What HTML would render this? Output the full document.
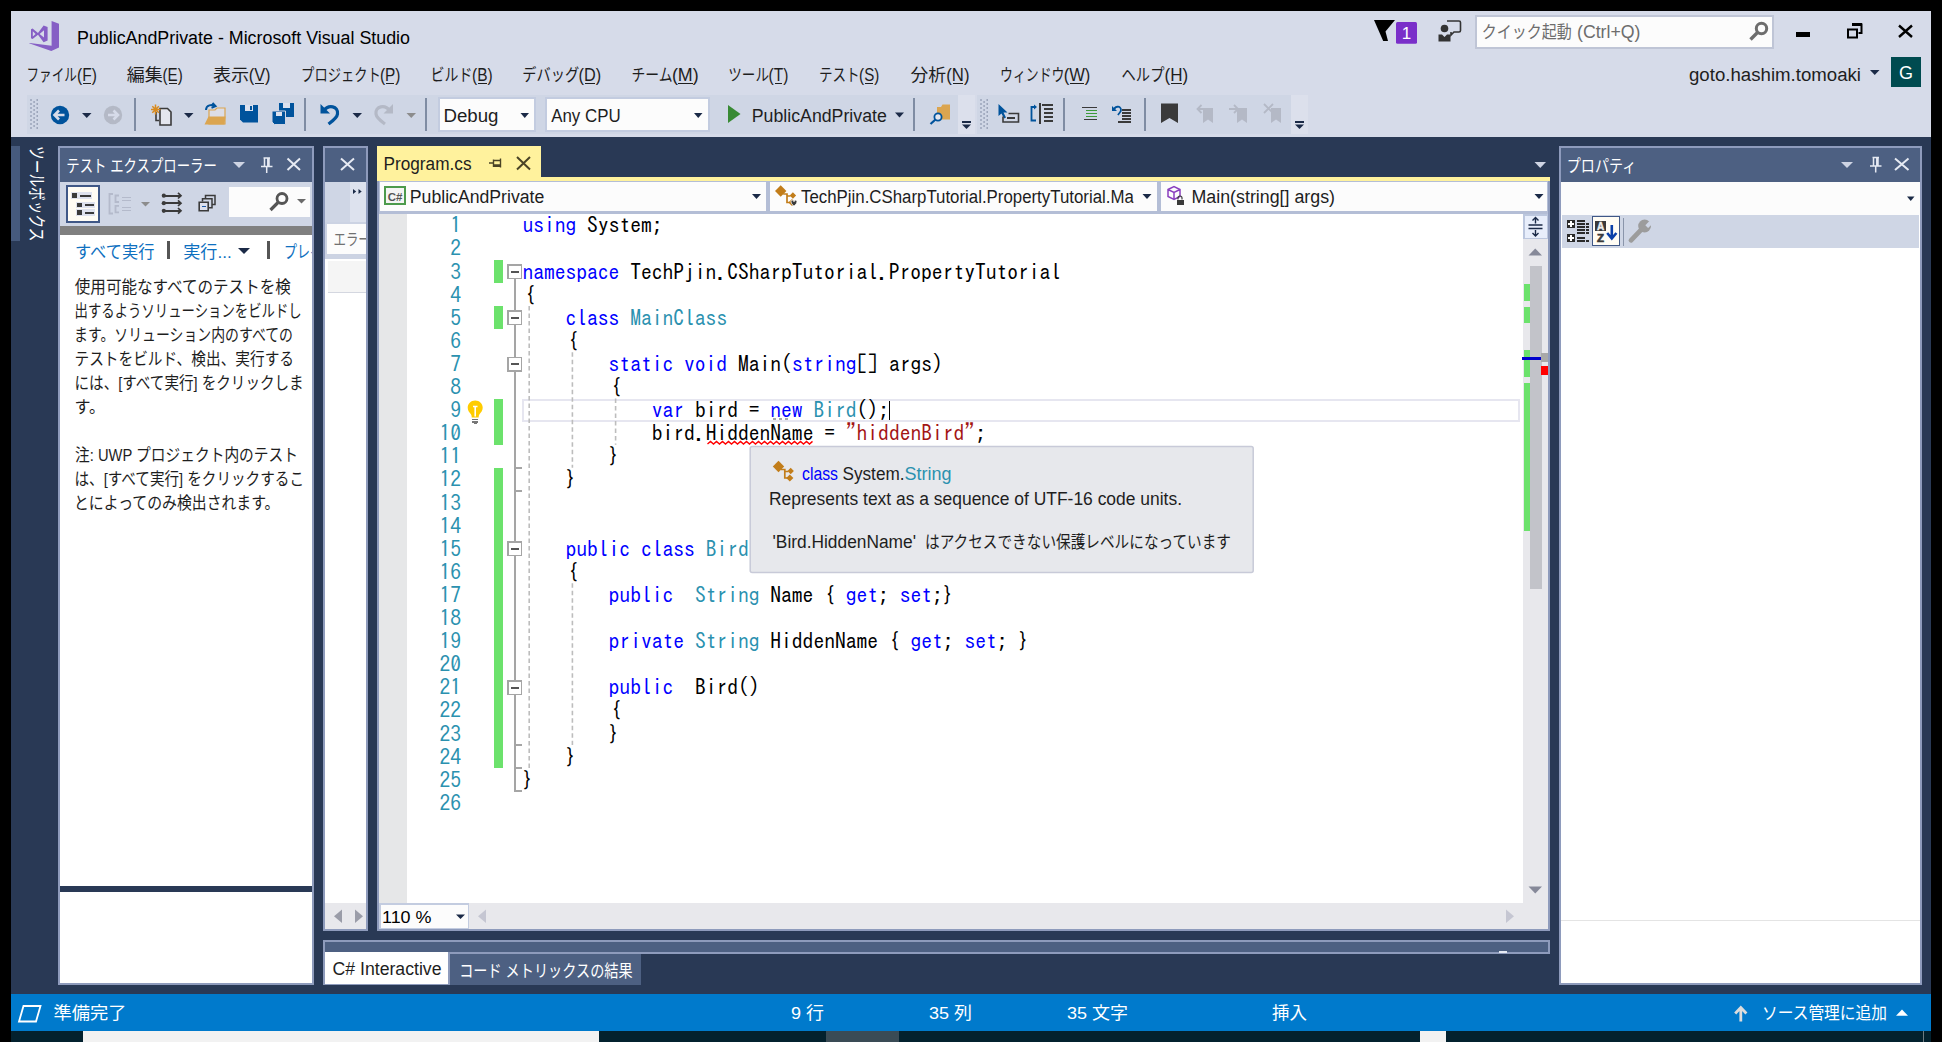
<!DOCTYPE html>
<html lang="ja"><head><meta charset="utf-8"><title>PublicAndPrivate - Microsoft Visual Studio</title>
<style>
html,body{margin:0;padding:0;background:#000;overflow:hidden}
svg{display:block;font-family:"Liberation Sans", "Noto Sans CJK JP", sans-serif;}
svg text{white-space:pre}
svg .c{font-family:"IPAGothic", "Liberation Mono", monospace;}
svg rect{shape-rendering:crispEdges}
</style></head><body>
<svg width="1942" height="1042" viewBox="0 0 1942 1042">
<g id="window-frame">
<rect x="0" y="0" width="1942" height="1042" fill="#000" />
<rect x="11" y="11" width="1920" height="126" fill="#D6DBE9" />
<rect x="11" y="137" width="1920" height="857" fill="#293955" />
<rect x="11" y="994" width="1920" height="37" fill="#007ACC" />
<rect x="11" y="1031" width="1920" height="11" fill="#03212E" />
<rect x="83" y="1031" width="516" height="11" fill="#F2F2F2" />
<rect x="826" y="1031" width="73" height="11" fill="#3A4B55" />
<rect x="1420" y="1031" width="26" height="11" fill="#F2F2F2" />
<rect x="1923" y="1031" width="1" height="11" fill="#6F7A80" />
</g>
<g id="title-bar">
<path d="M51.6 21L59 23.8V47.6L51.3 51L29 43.3L29.8 42.9L51.6 45.7Z" fill="#865FC5" />
<path d="M31 29.3L32.6 28.6L38 33L43.6 25.4L47.6 27V40.6L43.6 42.2L38 34.8L32.6 39L31 38.3Z M32.8 31.3V36.4L35.6 33.9Z M44 30.2V37.6L39.6 33.9Z" fill="#865FC5" fill-rule="evenodd"/>
<text x="77" y="44" font-size="18" fill="#000" textLength="333" lengthAdjust="spacingAndGlyphs" >PublicAndPrivate - Microsoft Visual Studio</text>
<path d="M1374 20H1395L1385.500 31.500L1388 41H1383.200Z" fill="#000" />
<rect x="1396" y="22" width="21" height="21.800" rx="1.5" fill="#7A2FC9" style="shape-rendering:auto"/>
<text x="1406.5" y="39" font-size="17" fill="#fff" text-anchor="middle" >1</text>
<path d="M1447 21h12a1.5 1.5 0 0 1 1.5 1.5v8a1.5 1.5 0 0 1-1.5 1.5h-5l-3 3v-3" fill="none" stroke="#333" stroke-width="1.6" />
<circle cx="1444.5" cy="28.5" r="3.8" fill="#333"/>
<path d="M1438.5 41.5v-7h3.5l2.5 2.5l2.500-2.5h3.5v7z" fill="#333" />
<rect x="1475" y="15" width="299" height="34" fill="#BFC5D6" />
<rect x="1477" y="17" width="295" height="30" fill="#FCFCFC" />
<text x="1481.8" y="37.7" font-size="17" fill="#6D6D6D" textLength="90" lengthAdjust="spacingAndGlyphs" >クイック起動</text>
<text x="1577" y="37.7" font-size="18" fill="#6D6D6D" textLength="63.5" lengthAdjust="spacingAndGlyphs" >(Ctrl+Q)</text>
<circle cx="1761.5" cy="28.5" r="5.2" fill="none" stroke="#6D6D6D" stroke-width="3"/>
<path d="M1757.5 32.5L1750.5 39.5" fill="none" stroke="#6D6D6D" stroke-width="3.4" />
<rect x="1796" y="32" width="14" height="5" fill="#000" />
<path d="M1853 24.5h8.5v8.5h-3" fill="none" stroke="#000" stroke-width="2" />
<rect x="1852" y="23" width="10" height="3" fill="#000" />
<path d="M1848 29.5h9v8h-9z" fill="none" stroke="#000" stroke-width="2" />
<path d="M1899 25.5L1912 37M1912 25.5L1899 37" fill="none" stroke="#000" stroke-width="2.4" />
<text x="1689" y="80.5" font-size="18" fill="#1E1E1E" textLength="172" lengthAdjust="spacingAndGlyphs" >goto.hashim.tomoaki</text>
<path d="M1870 70h9.5l-4.75 5z" fill="#1B2A47" />
<rect x="1891" y="57" width="30" height="30" fill="#004B50" />
<text x="1906" y="79" font-size="18" fill="#fff" text-anchor="middle" >G</text>
</g>
<g id="menu-bar">
<text x="26.5" y="81.2" font-size="17" fill="#1E1E1E" textLength="50.4" lengthAdjust="spacingAndGlyphs" >ファイル</text>
<text x="77" y="81.2" font-size="17.5" fill="#1E1E1E" textLength="19.8" lengthAdjust="spacingAndGlyphs" >(F)</text>
<rect x="83.2" y="83" width="7.4" height="1.3" fill="#1E1E1E" />
<text x="126.8" y="81.2" font-size="17" fill="#1E1E1E" textLength="36.1" lengthAdjust="spacingAndGlyphs" >編集</text>
<text x="162.5" y="81.2" font-size="17.5" fill="#1E1E1E" textLength="20.2" lengthAdjust="spacingAndGlyphs" >(E)</text>
<rect x="168.7" y="83" width="7.8" height="1.3" fill="#1E1E1E" />
<text x="212.9" y="81.2" font-size="17" fill="#1E1E1E" textLength="36.2" lengthAdjust="spacingAndGlyphs" >表示</text>
<text x="248.7" y="81.2" font-size="17.5" fill="#1E1E1E" textLength="21.9" lengthAdjust="spacingAndGlyphs" >(V)</text>
<rect x="254.9" y="83" width="9.5" height="1.3" fill="#1E1E1E" />
<text x="301.1" y="81.2" font-size="17" fill="#1E1E1E" textLength="79.8" lengthAdjust="spacingAndGlyphs" >プロジェクト</text>
<text x="379.9" y="81.2" font-size="17.5" fill="#1E1E1E" textLength="20.5" lengthAdjust="spacingAndGlyphs" >(P)</text>
<rect x="386.1" y="83" width="8.1" height="1.3" fill="#1E1E1E" />
<text x="430.6" y="81.2" font-size="17" fill="#1E1E1E" textLength="41.8" lengthAdjust="spacingAndGlyphs" >ビルド</text>
<text x="472.1" y="81.2" font-size="17.5" fill="#1E1E1E" textLength="20.6" lengthAdjust="spacingAndGlyphs" >(B)</text>
<rect x="478.3" y="83" width="8.2" height="1.3" fill="#1E1E1E" />
<text x="522.3" y="81.2" font-size="17" fill="#1E1E1E" textLength="56.8" lengthAdjust="spacingAndGlyphs" >デバッグ</text>
<text x="578.6" y="81.2" font-size="17.5" fill="#1E1E1E" textLength="22.6" lengthAdjust="spacingAndGlyphs" >(D)</text>
<rect x="584.8" y="83" width="10.2" height="1.3" fill="#1E1E1E" />
<text x="631.5" y="81.2" font-size="17" fill="#1E1E1E" textLength="41.1" lengthAdjust="spacingAndGlyphs" >チーム</text>
<text x="671.9" y="81.2" font-size="17.5" fill="#1E1E1E" textLength="26.8" lengthAdjust="spacingAndGlyphs" >(M)</text>
<rect x="678.1" y="83" width="14.4" height="1.3" fill="#1E1E1E" />
<text x="728.3" y="81.2" font-size="17" fill="#1E1E1E" textLength="40.7" lengthAdjust="spacingAndGlyphs" >ツール</text>
<text x="768.5" y="81.2" font-size="17.5" fill="#1E1E1E" textLength="19.8" lengthAdjust="spacingAndGlyphs" >(T)</text>
<rect x="774.7" y="83" width="7.4" height="1.3" fill="#1E1E1E" />
<text x="818.9" y="81.2" font-size="17" fill="#1E1E1E" textLength="40.7" lengthAdjust="spacingAndGlyphs" >テスト</text>
<text x="859.1" y="81.2" font-size="17.5" fill="#1E1E1E" textLength="20.2" lengthAdjust="spacingAndGlyphs" >(S)</text>
<rect x="865.3" y="83" width="7.8" height="1.3" fill="#1E1E1E" />
<text x="910.5" y="81.2" font-size="17" fill="#1E1E1E" textLength="35.6" lengthAdjust="spacingAndGlyphs" >分析</text>
<text x="946.3" y="81.2" font-size="17.5" fill="#1E1E1E" textLength="23.2" lengthAdjust="spacingAndGlyphs" >(N)</text>
<rect x="952.5" y="83" width="10.8" height="1.3" fill="#1E1E1E" />
<text x="1000.1" y="81.2" font-size="17" fill="#1E1E1E" textLength="64.4" lengthAdjust="spacingAndGlyphs" >ウィンドウ</text>
<text x="1063.7" y="81.2" font-size="17.5" fill="#1E1E1E" textLength="26.7" lengthAdjust="spacingAndGlyphs" >(W)</text>
<rect x="1069.9" y="83" width="14.3" height="1.3" fill="#1E1E1E" />
<text x="1121.6" y="81.2" font-size="17" fill="#1E1E1E" textLength="42.8" lengthAdjust="spacingAndGlyphs" >ヘルプ</text>
<text x="1164.6" y="81.2" font-size="17.5" fill="#1E1E1E" textLength="23.6" lengthAdjust="spacingAndGlyphs" >(H)</text>
<rect x="1170.8" y="83" width="11.2" height="1.3" fill="#1E1E1E" />
</g>
<g id="tool-bar">
<rect x="27" y="95" width="931" height="39" fill="#CFD6E5" />
<rect x="977" y="95" width="314" height="39" fill="#CFD6E5" />
<rect x="30.3" y="99.3" width="1.4" height="1.4" fill="#808BA3" style="shape-rendering:auto"/>
<rect x="36.5" y="99.3" width="1.4" height="1.4" fill="#808BA3" style="shape-rendering:auto"/>
<rect x="33.4" y="101.3" width="1.4" height="1.4" fill="#808BA3" style="shape-rendering:auto"/>
<rect x="30.3" y="103.3" width="1.4" height="1.4" fill="#808BA3" style="shape-rendering:auto"/>
<rect x="36.5" y="103.3" width="1.4" height="1.4" fill="#808BA3" style="shape-rendering:auto"/>
<rect x="33.4" y="105.3" width="1.4" height="1.4" fill="#808BA3" style="shape-rendering:auto"/>
<rect x="30.3" y="107.3" width="1.4" height="1.4" fill="#808BA3" style="shape-rendering:auto"/>
<rect x="36.5" y="107.3" width="1.4" height="1.4" fill="#808BA3" style="shape-rendering:auto"/>
<rect x="33.4" y="109.3" width="1.4" height="1.4" fill="#808BA3" style="shape-rendering:auto"/>
<rect x="30.3" y="111.3" width="1.4" height="1.4" fill="#808BA3" style="shape-rendering:auto"/>
<rect x="36.5" y="111.3" width="1.4" height="1.4" fill="#808BA3" style="shape-rendering:auto"/>
<rect x="33.4" y="113.3" width="1.4" height="1.4" fill="#808BA3" style="shape-rendering:auto"/>
<rect x="30.3" y="115.3" width="1.4" height="1.4" fill="#808BA3" style="shape-rendering:auto"/>
<rect x="36.5" y="115.3" width="1.4" height="1.4" fill="#808BA3" style="shape-rendering:auto"/>
<rect x="33.4" y="117.3" width="1.4" height="1.4" fill="#808BA3" style="shape-rendering:auto"/>
<rect x="30.3" y="119.3" width="1.4" height="1.4" fill="#808BA3" style="shape-rendering:auto"/>
<rect x="36.5" y="119.3" width="1.4" height="1.4" fill="#808BA3" style="shape-rendering:auto"/>
<rect x="33.4" y="121.3" width="1.4" height="1.4" fill="#808BA3" style="shape-rendering:auto"/>
<rect x="30.3" y="123.3" width="1.4" height="1.4" fill="#808BA3" style="shape-rendering:auto"/>
<rect x="36.5" y="123.3" width="1.4" height="1.4" fill="#808BA3" style="shape-rendering:auto"/>
<rect x="33.4" y="125.3" width="1.4" height="1.4" fill="#808BA3" style="shape-rendering:auto"/>
<rect x="30.3" y="127.3" width="1.4" height="1.4" fill="#808BA3" style="shape-rendering:auto"/>
<rect x="36.5" y="127.3" width="1.4" height="1.4" fill="#808BA3" style="shape-rendering:auto"/>
<rect x="980.3" y="99.3" width="1.4" height="1.4" fill="#808BA3" style="shape-rendering:auto"/>
<rect x="986.5" y="99.3" width="1.4" height="1.4" fill="#808BA3" style="shape-rendering:auto"/>
<rect x="983.4" y="101.3" width="1.4" height="1.4" fill="#808BA3" style="shape-rendering:auto"/>
<rect x="980.3" y="103.3" width="1.4" height="1.4" fill="#808BA3" style="shape-rendering:auto"/>
<rect x="986.5" y="103.3" width="1.4" height="1.4" fill="#808BA3" style="shape-rendering:auto"/>
<rect x="983.4" y="105.3" width="1.4" height="1.4" fill="#808BA3" style="shape-rendering:auto"/>
<rect x="980.3" y="107.3" width="1.4" height="1.4" fill="#808BA3" style="shape-rendering:auto"/>
<rect x="986.5" y="107.3" width="1.4" height="1.4" fill="#808BA3" style="shape-rendering:auto"/>
<rect x="983.4" y="109.3" width="1.4" height="1.4" fill="#808BA3" style="shape-rendering:auto"/>
<rect x="980.3" y="111.3" width="1.4" height="1.4" fill="#808BA3" style="shape-rendering:auto"/>
<rect x="986.5" y="111.3" width="1.4" height="1.4" fill="#808BA3" style="shape-rendering:auto"/>
<rect x="983.4" y="113.3" width="1.4" height="1.4" fill="#808BA3" style="shape-rendering:auto"/>
<rect x="980.3" y="115.3" width="1.4" height="1.4" fill="#808BA3" style="shape-rendering:auto"/>
<rect x="986.5" y="115.3" width="1.4" height="1.4" fill="#808BA3" style="shape-rendering:auto"/>
<rect x="983.4" y="117.3" width="1.4" height="1.4" fill="#808BA3" style="shape-rendering:auto"/>
<rect x="980.3" y="119.3" width="1.4" height="1.4" fill="#808BA3" style="shape-rendering:auto"/>
<rect x="986.5" y="119.3" width="1.4" height="1.4" fill="#808BA3" style="shape-rendering:auto"/>
<rect x="983.4" y="121.3" width="1.4" height="1.4" fill="#808BA3" style="shape-rendering:auto"/>
<rect x="980.3" y="123.3" width="1.4" height="1.4" fill="#808BA3" style="shape-rendering:auto"/>
<rect x="986.5" y="123.3" width="1.4" height="1.4" fill="#808BA3" style="shape-rendering:auto"/>
<rect x="983.4" y="125.3" width="1.4" height="1.4" fill="#808BA3" style="shape-rendering:auto"/>
<rect x="980.3" y="127.3" width="1.4" height="1.4" fill="#808BA3" style="shape-rendering:auto"/>
<rect x="986.5" y="127.3" width="1.4" height="1.4" fill="#808BA3" style="shape-rendering:auto"/>
<rect x="958" y="95" width="17" height="39" fill="#DCE0EC" />
<rect x="1291" y="95" width="17" height="39" fill="#DCE0EC" />
<rect x="134" y="98" width="2" height="33" fill="#7F8CA3" />
<rect x="304" y="98" width="2" height="33" fill="#7F8CA3" />
<rect x="425" y="98" width="2" height="33" fill="#7F8CA3" />
<rect x="913" y="98" width="2" height="33" fill="#7F8CA3" />
<rect x="1063" y="98" width="2" height="33" fill="#7F8CA3" />
<rect x="1144" y="98" width="2" height="33" fill="#7F8CA3" />
<circle cx="60" cy="115" r="9.2" fill="#00539C"/>
<path d="M54.5 115h10M59 110.5l-4.5 4.500l4.500 4.500" fill="none" stroke="#D6DBE9" stroke-width="2.6" />
<path d="M82 113h9.5l-4.75 5z" fill="#1B2A47" />
<circle cx="113" cy="115" r="9.2" fill="#B4B9C6"/>
<path d="M108 115h10M113.5 110.5l4.500 4.500l-4.500 4.500" fill="none" stroke="#D6DBE9" stroke-width="2.6" />
<path d="M160 108.500h7.500l3.500 3.500v13h-11z" fill="#E4E6EE" stroke="#3A3A3A" stroke-width="1.6" />
<path d="M156 112v8.500h3" fill="none" stroke="#3A3A3A" stroke-width="1.6" />
<path d="M155.5 104.500v10M151 109.500h9.500M152.300 106.300l6.500 6.500M158.800 106.300l-6.500 6.500" fill="none" stroke="#D88A1E" stroke-width="1.5" />
<path d="M184 113h9.5l-4.75 5z" fill="#1B2A47" />
<path d="M209 110h6l2-2h8v16h-16z" fill="#DCDDE6" stroke="#DBA550" stroke-width="1.2" />
<path d="M204.5 124.500l4-8h17l-1 8z" fill="#DBA550" />
<path d="M206 110c0-5 6-6 9-4M212.500 103l3 3.200l-4 1.500" fill="none" stroke="#00539C" stroke-width="2" />
<path d="M240 105h18v17.500h-15l-3-3z" fill="#00539C" />
<rect x="244.5" y="105" width="8.5" height="6" fill="#DCE1EE" />
<rect x="250" y="106" width="2" height="4" fill="#00539C" />
<path d="M279 103h15v14h-12.500l-2.500-2.500z" fill="#00539C" />
<rect x="283" y="103" width="7" height="4.5" fill="#DCE1EE" />
<path d="M272 111h13.500v13.500h-11l-2.500-2.500z" fill="#00539C" stroke="#CFD6E5" stroke-width="1" />
<rect x="276" y="111.5" width="6" height="4.5" fill="#DCE1EE" />
<path d="M323.500 111c5-7 15-5 14 3c-0.500 4-5 7-9 10" fill="none" stroke="#00539C" stroke-width="3.2" />
<path d="M320.500 104v9.500h9.500z" fill="#00539C" />
<path d="M352.5 113h9.5l-4.75 5z" fill="#1B2A47" />
<path d="M390 111c-5-7-15-5-14 3c0.500 4 5 7 9 10" fill="none" stroke="#B4B9C6" stroke-width="3.2" />
<path d="M393 104v9.500h-9.500z" fill="#B4B9C6" />
<path d="M406.5 113h9.5l-4.75 5z" fill="#8C8C8C" />
<rect x="438" y="97" width="98" height="35" fill="#C3CCE0" />
<rect x="440" y="99" width="94" height="31" fill="#FCFCFC" />
<text x="443.5" y="121.5" font-size="18" fill="#1E1E1E" textLength="55" lengthAdjust="spacingAndGlyphs" >Debug</text>
<path d="M520.5 113h8.5l-4.25 5z" fill="#1B2A47" />
<rect x="545" y="97" width="165" height="35" fill="#C3CCE0" />
<rect x="547" y="99" width="161" height="31" fill="#FCFCFC" />
<text x="551.2" y="121.5" font-size="18" fill="#1E1E1E" textLength="69.5" lengthAdjust="spacingAndGlyphs" >Any CPU</text>
<path d="M694 113h8.5l-4.25 5z" fill="#1B2A47" />
<path d="M728 105v18l12.500-9z" fill="#388A34" />
<text x="751.8" y="121.5" font-size="18" fill="#1E1E1E" textLength="135" lengthAdjust="spacingAndGlyphs" >PublicAndPrivate</text>
<path d="M895 112.5h9l-4.5 5z" fill="#1B2A47" />
<path d="M937 107h4l1.500-2.500h7.500v15h-13z" fill="#DBA550" />
<circle cx="938" cy="117" r="3.6" fill="#E4E6EE" stroke="#00539C" stroke-width="1.8"/>
<path d="M935.500 119.500l-5 4.500" fill="none" stroke="#00539C" stroke-width="2.2" />
<rect x="962" y="121" width="9" height="1.8" fill="#1B2A47" />
<path d="M962 124.5h9l-4.5 4.5z" fill="#1B2A47" />
<rect x="1295" y="121" width="9" height="1.8" fill="#1B2A47" />
<path d="M1295 124.5h9l-4.5 4.5z" fill="#1B2A47" />
<path d="M998.500 104l0 12l3-2.500l2.500 5l2-1l-2.500-5h4z" fill="#00539C" />
<path d="M1003 116.500v5.500h15.500v-8.500h-10" fill="none" stroke="#3A3A3A" stroke-width="1.6" />
<rect x="1007" y="117" width="8" height="1.6" fill="#3A3A3A" />
<path d="M1036 107h-4.500v13.500h4.500" fill="none" stroke="#00539C" stroke-width="1.8" />
<path d="M1034 104.500l3 2.500l-3 2.500z" fill="#00539C" />
<rect x="1039" y="103" width="1.6" height="21" fill="#3A3A3A" />
<rect x="1042" y="104" width="11" height="1.6" fill="#3A3A3A" />
<rect x="1044" y="108" width="9" height="1.6" fill="#3A3A3A" />
<rect x="1044" y="112" width="9" height="1.6" fill="#3A3A3A" />
<rect x="1044" y="116" width="9" height="1.6" fill="#3A3A3A" />
<rect x="1044" y="120" width="9" height="1.6" fill="#3A3A3A" />
<rect x="1084" y="106.5" width="13" height="1.5" fill="#3A3A3A" />
<rect x="1086" y="109.5" width="11" height="1.5" fill="#3C9A3A" />
<rect x="1086" y="112.5" width="11" height="1.5" fill="#3C9A3A" />
<rect x="1086" y="115.5" width="11" height="1.5" fill="#3C9A3A" />
<rect x="1084" y="118.5" width="13" height="1.5" fill="#3A3A3A" />
<rect x="1081.5" y="106.5" width="2" height="1.5" fill="#3A3A3A" />
<path d="M1114 111c0-5 7-6 7-1c0 2-2 3-3 5" fill="none" stroke="#00539C" stroke-width="1.8" />
<path d="M1112 106v5h5z" fill="#00539C" />
<rect x="1122" y="109" width="9" height="1.5" fill="#3A3A3A" />
<rect x="1122" y="112" width="9" height="1.5" fill="#3A3A3A" />
<rect x="1122" y="115" width="9" height="1.5" fill="#3A3A3A" />
<rect x="1122" y="118" width="9" height="1.5" fill="#3A3A3A" />
<rect x="1118" y="121" width="13" height="1.5" fill="#3A3A3A" />
<path d="M1161 103.500h17v19.500l-8.500-5l-8.500 5z" fill="#3A3A3A" />
<path d="M1203 108h10v15l-5-3.500l-5 3.500z" fill="#B4B9C6" />
<path d="M1197.500 109h9M1201.500 105l-4 4l4 4" fill="none" stroke="#B4B9C6" stroke-width="1.8" />
<path d="M1237 108h10v15l-5-3.500l-5 3.500z" fill="#B4B9C6" />
<path d="M1229 109h9M1234 105l4 4l-4 4" fill="none" stroke="#B4B9C6" stroke-width="1.8" />
<path d="M1271 108h10v15l-5-3.500l-5 3.500z" fill="#B4B9C6" />
<path d="M1264 104l9 9M1273 104l-9 9" fill="none" stroke="#B4B9C6" stroke-width="1.8" />
</g>
<g id="toolbox-tab">
<rect x="11" y="146" width="9" height="95" fill="#465A7D" />
<text transform="translate(29.8,146) rotate(90)" x="0" y="0" font-size="18.5" fill="#fff" textLength="95.500" lengthAdjust="spacingAndGlyphs">ツールボックス</text>
</g>
<g id="test-explorer">
<rect x="58" y="146" width="256" height="839" fill="#8E9BBC" />
<rect x="60" y="148" width="252" height="835" fill="#fff" />
<rect x="60" y="148" width="252" height="34" fill="#4D6082" />
<text x="66.3" y="172" font-size="17" fill="#fff" textLength="150.5" lengthAdjust="spacingAndGlyphs" >テスト エクスプローラー</text>
<path d="M233 162h12l-6.0 6z" fill="#CED4E3" />
<path d="M263.5 158h6.500M264.5 158v8M269 158v8M267.8 158v8M261 166.5h11.500M266.7 166.5v6.500" fill="none" stroke="#E6EAF3" stroke-width="1.5" />
<path d="M287.5 158.5L300 170M300 158.5L287.5 170" fill="none" stroke="#E6EAF3" stroke-width="2" />
<rect x="60" y="182" width="252" height="44" fill="#CFD6E5" />
<rect x="66" y="185" width="34" height="38" fill="#3F5786" />
<rect x="68" y="187" width="30" height="34" fill="#FFFCF4" />
<rect x="71.3" y="192.4" width="20.299999999999997" height="6.5" fill="#DFE2EE" />
<rect x="72.3" y="193.4" width="4.5" height="4.5" fill="#3A3A3A" />
<rect x="80" y="194.8" width="10.599999999999994" height="1.8" fill="#3A3A3A" />
<rect x="76" y="201.8" width="18.5" height="6.5" fill="#DFE2EE" />
<rect x="77" y="202.8" width="4.5" height="4.5" fill="#3A3A3A" />
<rect x="84.7" y="204.20000000000002" width="8.799999999999997" height="1.8" fill="#3A3A3A" />
<rect x="76" y="209.3" width="18.5" height="6.5" fill="#DFE2EE" />
<rect x="77" y="210.3" width="4.5" height="4.5" fill="#3A3A3A" />
<rect x="84.7" y="211.70000000000002" width="8.799999999999997" height="1.8" fill="#3A3A3A" />
<path d="M113 194h-3.500v19.500h3.500" fill="none" stroke="#B4BACB" stroke-width="1.8" />
<path d="M119 195.5h-3.500v6.500h3.500" fill="none" stroke="#B4BACB" stroke-width="1.8" />
<rect x="122" y="196.5" width="8.5" height="1.5" fill="#B4BACB" />
<rect x="122" y="199.5" width="8.5" height="1.5" fill="#B4BACB" />
<path d="M119 205.8h-3.500v6.500h3.500" fill="none" stroke="#B4BACB" stroke-width="1.8" />
<rect x="122" y="206.8" width="8.5" height="1.5" fill="#B4BACB" />
<rect x="122" y="209.8" width="8.5" height="1.5" fill="#B4BACB" />
<path d="M141 202h9l-4.5 4.5z" fill="#8C8C8C" />
<circle cx="163.8" cy="195.7" r="2.1" fill="#3A3A3A"/>
<rect x="164" y="194.79999999999998" width="16" height="1.8" fill="#3A3A3A" />
<path d="M178 192.89999999999998l3 2.800l-3 2.800" fill="none" stroke="#3A3A3A" stroke-width="1.7" />
<circle cx="163.8" cy="203.2" r="2.1" fill="#3A3A3A"/>
<rect x="164" y="202.29999999999998" width="16" height="1.8" fill="#3A3A3A" />
<path d="M178 200.39999999999998l3 2.800l-3 2.800" fill="none" stroke="#3A3A3A" stroke-width="1.7" />
<circle cx="163.8" cy="210.8" r="2.1" fill="#3A3A3A"/>
<rect x="164" y="209.9" width="16" height="1.8" fill="#3A3A3A" />
<path d="M178 208.0l3 2.800l-3 2.800" fill="none" stroke="#3A3A3A" stroke-width="1.7" />
<path d="M202.500 201.500v-2.800h9.500v9h-3M205.500 198v-2.500h9.500v9h-3" fill="none" stroke="#3A3A3A" stroke-width="1.5" />
<path d="M199.200 202.200h9v8.500h-9z" fill="#DDE1EE" stroke="#3A3A3A" stroke-width="1.6" />
<rect x="201.8" y="205.8" width="4" height="1.6" fill="#1E5AA8" />
<rect x="229" y="187" width="81" height="30" fill="#FCFCFC" />
<circle cx="282" cy="198.5" r="5" fill="none" stroke="#555" stroke-width="2.8"/>
<path d="M278 202.500L270.500 210" fill="none" stroke="#555" stroke-width="3.2" />
<path d="M297 199h9l-4.5 4.5z" fill="#6A6A6A" />
<rect x="60" y="226" width="252" height="9" fill="#808080" />
<text x="75" y="257.5" font-size="17" fill="#0E70C0" textLength="79.5" lengthAdjust="spacingAndGlyphs" >すべて実行</text>
<rect x="167" y="241" width="3" height="18" fill="#555" />
<text x="183.2" y="257.5" font-size="17" fill="#0E70C0" textLength="48.5" lengthAdjust="spacingAndGlyphs" >実行...</text>
<path d="M238 248h12l-6.0 6z" fill="#1B2A47" />
<rect x="267" y="241" width="3" height="18" fill="#555" />
<clipPath id="cl1"><rect x="60" y="236" width="252" height="30"/></clipPath>
<text x="284" y="257.5" font-size="17" fill="#0E70C0" textLength="78" lengthAdjust="spacingAndGlyphs" clip-path="url(#cl1)">プレイリスト</text>
<text x="74.8" y="292.5" font-size="17" fill="#1E1E1E" textLength="216.0" lengthAdjust="spacingAndGlyphs" >使用可能なすべてのテストを検</text>
<text x="74.5" y="316.5" font-size="17" fill="#1E1E1E" textLength="227.2" lengthAdjust="spacingAndGlyphs" >出するようソリューションをビルドし</text>
<text x="74" y="340.5" font-size="17" fill="#1E1E1E" textLength="219" lengthAdjust="spacingAndGlyphs" >ます。ソリューション内のすべての</text>
<text x="74.5" y="364.5" font-size="17" fill="#1E1E1E" textLength="219.5" lengthAdjust="spacingAndGlyphs" >テストをビルド、検出、実行する</text>
<text x="74.5" y="388.5" font-size="17" fill="#1E1E1E" textLength="229.2" lengthAdjust="spacingAndGlyphs" >には、[すべて実行] をクリックしま</text>
<text x="74.5" y="412.5" font-size="17" fill="#1E1E1E" textLength="30.5" lengthAdjust="spacingAndGlyphs" >す。</text>
<text x="75" y="460.5" font-size="17" fill="#1E1E1E" textLength="223" lengthAdjust="spacingAndGlyphs" >注: UWP プロジェクト内のテスト</text>
<text x="74.5" y="484.5" font-size="17" fill="#1E1E1E" textLength="229.5" lengthAdjust="spacingAndGlyphs" >は、[すべて実行] をクリックするこ</text>
<text x="74" y="508.5" font-size="17" fill="#1E1E1E" textLength="205.5" lengthAdjust="spacingAndGlyphs" >とによってのみ検出されます。</text>
<rect x="60" y="886" width="252" height="6" fill="#293955" />
</g>
<g id="error-list-panel">
<rect x="323" y="146" width="45" height="785" fill="#8E9BBC" />
<rect x="325" y="148" width="41" height="781" fill="#fff" />
<rect x="325" y="148" width="41" height="34" fill="#4D6082" />
<path d="M341 158.5L354 170M354 158.5L341 170" fill="none" stroke="#E6EAF3" stroke-width="2" />
<rect x="325" y="182" width="41" height="40" fill="#CFD6E5" />
<rect x="350" y="182" width="16" height="40" fill="#DDE2EE" />
<path d="M353 189v5l3.2 -2.5z" fill="#1B2A47" />
<path d="M358.5 189v5l3.2 -2.5z" fill="#1B2A47" />
<rect x="325" y="222" width="41" height="36.5" fill="#CCD3E3" />
<rect x="327" y="224" width="39" height="30" fill="#FCFCFC" />
<clipPath id="cl2"><rect x="325" y="222" width="41" height="40"/></clipPath>
<text x="333.5" y="244.8" font-size="16" fill="#717171" textLength="62" lengthAdjust="spacingAndGlyphs" clip-path="url(#cl2)">エラー一覧</text>
<rect x="328" y="261" width="37.5" height="31" fill="#F5F5F5" />
<rect x="328" y="292" width="37.5" height="1" fill="#D4D7E0" />
<rect x="325" y="903" width="41" height="26" fill="#E8E8EC" />
<path d="M342 909.5v13.5l-8 -6.75z" fill="#9A9CA8" />
<path d="M355 909.5v13.5l8 -6.75z" fill="#9A9CA8" />
</g>
<g id="editor">
<rect x="377" y="146" width="164" height="32" fill="#FFF29D" />
<rect x="377" y="177" width="1173" height="4" fill="#FFF29D" />
<text x="383.5" y="170" font-size="18" fill="#1E1E1E" textLength="88" lengthAdjust="spacingAndGlyphs" >Program.cs</text>
<path d="M489 163h4M493.500 159.500v7.500M493.500 160.500h6.500M493.500 165h6.500M493.500 166.200h6.500M500.500 158.500v9" fill="none" stroke="#4A4426" stroke-width="1.4" />
<path d="M517 157L530 169.5M530 157L517 169.5" fill="none" stroke="#4A4426" stroke-width="2" />
<path d="M1534.5 162h11.5l-5.75 6z" fill="#CED4E3" />
<rect x="377" y="181" width="1173" height="750" fill="#8E9BBC" />
<rect x="379" y="181" width="1169" height="748" fill="#fff" />
<rect x="379" y="181" width="1169" height="33" fill="#B4BED6" />
<rect x="380" y="182" width="386" height="29" fill="#FCFCFC" />
<rect x="770" y="182" width="387" height="29" fill="#FCFCFC" />
<rect x="1161" y="182" width="386" height="29" fill="#FCFCFC" />
<rect x="384" y="186" width="22" height="19" fill="#4C9A4C" />
<rect x="385.6" y="187.6" width="18.8" height="15.8" fill="#F4F4F4" />
<text x="395" y="201" font-size="11.5" fill="#555" text-anchor="middle" font-weight="bold" >C#</text>
<text x="409.8" y="202.5" font-size="18" fill="#1E1E1E" textLength="134.5" lengthAdjust="spacingAndGlyphs" >PublicAndPrivate</text>
<path d="M752 194h9l-4.5 5z" fill="#1B2A47" />
<clipPath id="cl3"><rect x="770" y="182" width="363.500" height="29"/></clipPath>
<text x="801" y="202.5" font-size="18" fill="#1E1E1E" textLength="388" lengthAdjust="spacingAndGlyphs" clip-path="url(#cl3)">TechPjin.CSharpTutorial.PropertyTutorial.MainClass</text>
<g transform="translate(2.200,-275.500)">
<path d="M772.800 466.500l5.700-5.700l5.700 5.700l-5.700 5.700z" fill="#C27D1A" />
<path d="M781 469.500h3.800v8.500h3M784.800 471.500h3.500" fill="none" stroke="#C27D1A" stroke-width="1.7" />
<path d="M787.500 471l3.200-3.200l3.200 3.200l-3.200 3.200zM786.200 478l3.600-3.600l3.600 3.600l-3.600 3.600z" fill="#C27D1A" />
</g>
<path d="M791 201.800c0-2.200 3-2.200 3 0c0-2.200 3-2.200 3 0c0 2-3 4.200-3 4.200s-3-2.200-3-4.200z" fill="#3A3A3A" stroke="#FCFCFC" stroke-width="0.8" />
<path d="M1142.5 194h9l-4.5 5z" fill="#1B2A47" />
<path d="M1168 189.500l6-3l6 3v7l-6 3l-6-3zM1168 189.500l6 3l6-3M1174 192.500v7" fill="none" stroke="#8A3FBF" stroke-width="1.5" />
<rect x="1176.5" y="199.5" width="7" height="5.5" fill="#3A3A3A" />
<path d="M1178 199.500v-1.500a2 2 0 0 1 4 0v1.500" fill="none" stroke="#3A3A3A" stroke-width="1.2" />
<text x="1191.5" y="202.5" font-size="18" fill="#1E1E1E" textLength="143.5" lengthAdjust="spacingAndGlyphs" >Main(string[] args)</text>
<path d="M1534.5 194h9l-4.5 5z" fill="#1B2A47" />
<rect x="379" y="214" width="28" height="689" fill="#E6E7E8" />
<rect x="1523" y="214" width="25" height="689" fill="#E8E8EC" />
<rect x="1523" y="214" width="25" height="25" fill="#BCC7DE" />
<rect x="1524.5" y="215.5" width="22.0" height="22.0" fill="#E8EEFB" />
<path d="M1528.500 225h14M1528.500 228.500h14M1535.500 217.500v6M1535.500 230v6M1532.500 220.500l3-3l3 3M1532.500 233l3 3l3-3" fill="none" stroke="#1B2A47" stroke-width="1.4" />
<path d="M1528.5 255.5h13.5l-6.75 -7z" fill="#868999" />
<path d="M1528.5 886.5h13.5l-6.75 7z" fill="#868999" />
<rect x="1529.5" y="266" width="12.5" height="323" fill="#C2C3C9" />
<rect x="1524" y="284" width="6" height="17" fill="#6CE26C" />
<rect x="1524" y="306.5" width="6" height="16.5" fill="#6CE26C" />
<rect x="1524" y="350" width="6" height="27" fill="#6CE26C" />
<rect x="1524" y="383" width="6" height="147.5" fill="#6CE26C" />
<rect x="1522" y="356.5" width="19" height="3" fill="#0000CD" />
<rect x="1541" y="353" width="7" height="9" fill="#A9A9A9" />
<rect x="1541" y="365.5" width="7" height="9" fill="#FF0000" />
<rect x="379" y="903" width="1169" height="26" fill="#E8E8EC" />
<rect x="379" y="903" width="90" height="26" fill="#C3CCE0" />
<rect x="380.5" y="904.5" width="87.0" height="23.0" fill="#FCFCFC" />
<text x="382" y="922.5" font-size="17" fill="#000" textLength="49.5" lengthAdjust="spacingAndGlyphs" >110 %</text>
<path d="M456 914.5h9l-4.5 4.5z" fill="#1B2A47" />
<path d="M486 909.5v13.5l-8 -6.75z" fill="#C5C6D2" />
<path d="M1506 909.5v13.5l8 -6.75z" fill="#C5C6D2" />
<rect x="494.4" y="259.9" width="8.6" height="23.1" fill="#6CE26C" />
<rect x="494.4" y="306.1" width="8.6" height="23.1" fill="#6CE26C" />
<rect x="494.4" y="398.5" width="8.6" height="46.2" fill="#6CE26C" />
<rect x="494.4" y="467.8" width="8.6" height="300.3" fill="#6CE26C" />
<rect x="522" y="399" width="998" height="23" fill="#E6E6F0" />
<rect x="524" y="401" width="994" height="19" fill="#fff" />
<rect x="514" y="271.9" width="2" height="519.3000000000001" fill="#A5A5A5" />
<rect x="514" y="467" width="7.5" height="1.6" fill="#A5A5A5" />
<rect x="514" y="490" width="7.5" height="1.6" fill="#A5A5A5" />
<rect x="514" y="744" width="7.5" height="1.6" fill="#A5A5A5" />
<rect x="514" y="767" width="7.5" height="1.6" fill="#A5A5A5" />
<rect x="514" y="790" width="7.5" height="1.6" fill="#A5A5A5" />
<rect x="507" y="264.2" width="15" height="15" fill="#A5A5A5" />
<rect x="508.5" y="265.7" width="12.0" height="12.0" fill="#fff" />
<rect x="510.5" y="270.9" width="8" height="2" fill="#555" />
<rect x="507" y="310.4" width="15" height="15" fill="#A5A5A5" />
<rect x="508.5" y="311.9" width="12.0" height="12.0" fill="#fff" />
<rect x="510.5" y="317.1" width="8" height="2" fill="#555" />
<rect x="507" y="356.6" width="15" height="15" fill="#A5A5A5" />
<rect x="508.5" y="358.1" width="12.0" height="12.0" fill="#fff" />
<rect x="510.5" y="363.3" width="8" height="2" fill="#555" />
<rect x="507" y="541.4" width="15" height="15" fill="#A5A5A5" />
<rect x="508.5" y="542.9" width="12.0" height="12.0" fill="#fff" />
<rect x="510.5" y="548.1" width="8" height="2" fill="#555" />
<rect x="507" y="680.0" width="15" height="15" fill="#A5A5A5" />
<rect x="508.5" y="681.5" width="12.0" height="12.0" fill="#fff" />
<rect x="510.5" y="686.7" width="8" height="2" fill="#555" />
<line x1="529.2" y1="306.1" x2="529.2" y2="768.1000000000001" stroke="#BDBDBD" stroke-width="1.6" stroke-dasharray="4.500 3"/>
<line x1="572.4" y1="352.3" x2="572.4" y2="467.8" stroke="#BDBDBD" stroke-width="1.6" stroke-dasharray="4.500 3"/>
<line x1="615.6" y1="398.5" x2="615.6" y2="444.7" stroke="#BDBDBD" stroke-width="1.6" stroke-dasharray="4.500 3"/>
<line x1="572.4" y1="583.3" x2="572.4" y2="745.0" stroke="#BDBDBD" stroke-width="1.6" stroke-dasharray="4.500 3"/>
<text x="461" y="233.3" font-size="21.56" fill="#2B91AF" class="c" text-anchor="end" >1</text>
<text x="522.4" y="233.3" font-size="21.56" fill="#0000FF" class="c" >using</text>
<text x="587.1" y="233.3" font-size="21.56" fill="#000" class="c" >System;</text>
<text x="461" y="256.4" font-size="21.56" fill="#2B91AF" class="c" text-anchor="end" >2</text>
<text x="461" y="279.5" font-size="21.56" fill="#2B91AF" class="c" text-anchor="end" >3</text>
<text x="522.4" y="279.5" font-size="21.56" fill="#0000FF" class="c" >namespace</text>
<text x="630.2" y="279.5" font-size="21.56" fill="#000" class="c" >TechPjin.CSharpTutorial.PropertyTutorial</text>
<text x="461" y="302.6" font-size="21.56" fill="#2B91AF" class="c" text-anchor="end" >4</text>
<text x="524.4" y="302.6" font-size="21.56" fill="#000" class="c" >{</text>
<text x="461" y="325.7" font-size="21.56" fill="#2B91AF" class="c" text-anchor="end" >5</text>
<text x="565.5" y="325.7" font-size="21.56" fill="#0000FF" class="c" >class</text>
<text x="630.2" y="325.7" font-size="21.56" fill="#2B91AF" class="c" >MainClass</text>
<text x="461" y="348.8" font-size="21.56" fill="#2B91AF" class="c" text-anchor="end" >6</text>
<text x="567.5" y="348.8" font-size="21.56" fill="#000" class="c" >{</text>
<text x="461" y="371.9" font-size="21.56" fill="#2B91AF" class="c" text-anchor="end" >7</text>
<text x="608.6" y="371.9" font-size="21.56" fill="#0000FF" class="c" >static void</text>
<text x="738.0" y="371.9" font-size="21.56" fill="#000" class="c" >Main(</text>
<text x="791.9" y="371.9" font-size="21.56" fill="#0000FF" class="c" >string</text>
<text x="856.6" y="371.9" font-size="21.56" fill="#000" class="c" >[] args)</text>
<text x="461" y="395.0" font-size="21.56" fill="#2B91AF" class="c" text-anchor="end" >8</text>
<text x="610.6" y="395.0" font-size="21.56" fill="#000" class="c" >{</text>
<text x="461" y="418.1" font-size="21.56" fill="#2B91AF" class="c" text-anchor="end" >9</text>
<text x="651.8" y="418.1" font-size="21.56" fill="#0000FF" class="c" >var</text>
<text x="694.9" y="418.1" font-size="21.56" fill="#000" class="c" >bird =</text>
<text x="770.3" y="418.1" font-size="21.56" fill="#0000FF" class="c" >new</text>
<text x="813.5" y="418.1" font-size="21.56" fill="#2B91AF" class="c" >Bird</text>
<text x="856.6" y="418.1" font-size="21.56" fill="#000" class="c" >();</text>
<text x="461" y="441.2" font-size="21.56" fill="#2B91AF" class="c" text-anchor="end" >10</text>
<text x="651.8" y="441.2" font-size="21.56" fill="#000" class="c" >bird.HiddenName =</text>
<text x="845.8" y="441.2" font-size="21.56" fill="#A31515" class="c" >"hiddenBird"</text>
<text x="975.2" y="441.2" font-size="21.56" fill="#000" class="c" >;</text>
<text x="461" y="464.3" font-size="21.56" fill="#2B91AF" class="c" text-anchor="end" >11</text>
<text x="608.6" y="464.3" font-size="21.56" fill="#000" class="c" >}</text>
<text x="461" y="487.4" font-size="21.56" fill="#2B91AF" class="c" text-anchor="end" >12</text>
<text x="565.5" y="487.4" font-size="21.56" fill="#000" class="c" >}</text>
<text x="461" y="510.5" font-size="21.56" fill="#2B91AF" class="c" text-anchor="end" >13</text>
<text x="461" y="533.6" font-size="21.56" fill="#2B91AF" class="c" text-anchor="end" >14</text>
<text x="461" y="556.7" font-size="21.56" fill="#2B91AF" class="c" text-anchor="end" >15</text>
<text x="565.5" y="556.7" font-size="21.56" fill="#0000FF" class="c" >public class</text>
<text x="705.7" y="556.7" font-size="21.56" fill="#2B91AF" class="c" >Bird</text>
<text x="461" y="579.8" font-size="21.56" fill="#2B91AF" class="c" text-anchor="end" >16</text>
<text x="567.5" y="579.8" font-size="21.56" fill="#000" class="c" >{</text>
<text x="461" y="602.9" font-size="21.56" fill="#2B91AF" class="c" text-anchor="end" >17</text>
<text x="608.6" y="602.9" font-size="21.56" fill="#0000FF" class="c" >public</text>
<text x="694.9" y="602.9" font-size="21.56" fill="#2B91AF" class="c" >String</text>
<text x="770.3" y="602.9" font-size="21.56" fill="#000" class="c" >Name {</text>
<text x="845.8" y="602.9" font-size="21.56" fill="#0000FF" class="c" >get</text>
<text x="878.1" y="602.9" font-size="21.56" fill="#000" class="c" >;</text>
<text x="899.7" y="602.9" font-size="21.56" fill="#0000FF" class="c" >set</text>
<text x="932.0" y="602.9" font-size="21.56" fill="#000" class="c" >;}</text>
<text x="461" y="626.0" font-size="21.56" fill="#2B91AF" class="c" text-anchor="end" >18</text>
<text x="461" y="649.1" font-size="21.56" fill="#2B91AF" class="c" text-anchor="end" >19</text>
<text x="608.6" y="649.1" font-size="21.56" fill="#0000FF" class="c" >private</text>
<text x="694.9" y="649.1" font-size="21.56" fill="#2B91AF" class="c" >String</text>
<text x="770.3" y="649.1" font-size="21.56" fill="#000" class="c" >HiddenName {</text>
<text x="910.5" y="649.1" font-size="21.56" fill="#0000FF" class="c" >get</text>
<text x="942.8" y="649.1" font-size="21.56" fill="#000" class="c" >;</text>
<text x="964.4" y="649.1" font-size="21.56" fill="#0000FF" class="c" >set</text>
<text x="996.7" y="649.1" font-size="21.56" fill="#000" class="c" >; }</text>
<text x="461" y="672.2" font-size="21.56" fill="#2B91AF" class="c" text-anchor="end" >20</text>
<text x="461" y="695.3" font-size="21.56" fill="#2B91AF" class="c" text-anchor="end" >21</text>
<text x="608.6" y="695.3" font-size="21.56" fill="#0000FF" class="c" >public</text>
<text x="694.9" y="695.3" font-size="21.56" fill="#000" class="c" >Bird()</text>
<text x="461" y="718.4" font-size="21.56" fill="#2B91AF" class="c" text-anchor="end" >22</text>
<text x="610.6" y="718.4" font-size="21.56" fill="#000" class="c" >{</text>
<text x="461" y="741.5" font-size="21.56" fill="#2B91AF" class="c" text-anchor="end" >23</text>
<text x="608.6" y="741.5" font-size="21.56" fill="#000" class="c" >}</text>
<text x="461" y="764.6" font-size="21.56" fill="#2B91AF" class="c" text-anchor="end" >24</text>
<text x="565.5" y="764.6" font-size="21.56" fill="#000" class="c" >}</text>
<text x="461" y="787.7" font-size="21.56" fill="#2B91AF" class="c" text-anchor="end" >25</text>
<text x="522.4" y="787.7" font-size="21.56" fill="#000" class="c" >}</text>
<text x="461" y="810.8" font-size="21.56" fill="#2B91AF" class="c" text-anchor="end" >26</text>
<rect x="888.5" y="401" width="1.6" height="19" fill="#000" />
<path d="M707.5 444.0L710.5 441.4L713.5 444.0L716.5 441.4L719.5 444.0L722.5 441.4L725.5 444.0L728.5 441.4L731.5 444.0L734.5 441.4L737.5 444.0L740.5 441.4L743.5 444.0L746.5 441.4L749.5 444.0L752.5 441.4L755.5 444.0L758.5 441.4L761.5 444.0L764.5 441.4L767.5 444.0L770.5 441.4L773.5 444.0L776.5 441.4L779.5 444.0L782.5 441.4L785.5 444.0L788.5 441.4L791.5 444.0L794.5 441.4L797.5 444.0L800.5 441.4L803.5 444.0L806.5 441.4L809.5 444.0L812.5 441.4" fill="none" stroke="#FF0000" stroke-width="1.4" />
<rect x="773" y="418" width="3" height="2" fill="#A8A8A8" />
<rect x="779" y="418" width="3" height="2" fill="#A8A8A8" />
<rect x="785" y="418" width="3" height="2" fill="#A8A8A8" />
<path d="M475.200 400.500c-4.500 0-7.500 3.300-7.500 7.200c0 3 1.800 4.800 3 6.300c0.800 1 1 2 1 3.500h7c0-1.500 0.200-2.500 1-3.500c1.200-1.500 3-3.300 3-6.300c0-3.900-3-7.200-7.500-7.200z" fill="#FFCC00" />
<path d="M473 406.500h4.500M475.200 406.500v10" fill="none" stroke="#fff" stroke-width="1.6" />
<rect x="472.2" y="418.5" width="6" height="1.5" fill="#777" />
<rect x="472.2" y="421" width="6" height="1.5" fill="#777" />
<rect x="473.5" y="423.2" width="3.5" height="1.2" fill="#777" />
<rect x="750.2" y="446.400" width="503" height="126" rx="2" fill="#E7E8EC" stroke="#C8CAD8" stroke-width="1.5" style="shape-rendering:auto"/>
<path d="M772.800 466.500l5.700-5.700l5.700 5.700l-5.700 5.700z" fill="#C27D1A" />
<path d="M781 469.500h3.800v8.500h3M784.800 471.500h3.500" fill="none" stroke="#C27D1A" stroke-width="1.7" />
<path d="M787.500 471l3.200-3.200l3.200 3.200l-3.200 3.200zM786.200 478l3.600-3.600l3.600 3.600l-3.600 3.600z" fill="#C27D1A" />
<text x="802" y="479.5" font-size="18" fill="#0000FF" textLength="36" lengthAdjust="spacingAndGlyphs" >class</text>
<text x="842.5" y="479.5" font-size="18" fill="#1E1E1E" textLength="62" lengthAdjust="spacingAndGlyphs" >System.</text>
<text x="904.5" y="479.5" font-size="18" fill="#2B91AF" textLength="47" lengthAdjust="spacingAndGlyphs" >String</text>
<text x="769" y="505" font-size="18" fill="#1E1E1E" textLength="413" lengthAdjust="spacingAndGlyphs" >Represents text as a sequence of UTF-16 code units.</text>
<text x="772.5" y="548" font-size="18" fill="#1E1E1E" textLength="143.5" lengthAdjust="spacingAndGlyphs" >'Bird.HiddenName'</text>
<text x="925" y="548" font-size="17" fill="#1E1E1E" textLength="306" lengthAdjust="spacingAndGlyphs" >はアクセスできない保護レベルになっています</text>
</g>
<g id="bottom-tabs">
<rect x="323" y="940" width="1227" height="14" fill="#8E9BBC" />
<rect x="325" y="942" width="1223" height="10" fill="#4D6082" />
<rect x="1499" y="951" width="8" height="1.5" fill="#E6EAF3" />
<rect x="323" y="952" width="127" height="33" fill="#8E9BBC" />
<rect x="325" y="952" width="123" height="32" fill="#fff" />
<text x="332.5" y="974.7" font-size="17.5" fill="#1E1E1E" textLength="109" lengthAdjust="spacingAndGlyphs" >C# Interactive</text>
<rect x="450" y="954" width="191" height="31" fill="#4D6082" />
<text x="459.2" y="976.5" font-size="17" fill="#fff" textLength="173.5" lengthAdjust="spacingAndGlyphs" >コード メトリックスの結果</text>
</g>
<g id="properties-panel">
<rect x="1559" y="146" width="363" height="839" fill="#8E9BBC" />
<rect x="1561" y="148" width="359" height="835" fill="#fff" />
<rect x="1561" y="148" width="359" height="34" fill="#4D6082" />
<text x="1566.8" y="172" font-size="17" fill="#fff" textLength="69.5" lengthAdjust="spacingAndGlyphs" >プロパティ</text>
<path d="M1841 162h12l-6.0 6z" fill="#CED4E3" />
<path d="M1872.5 157.5h6.500M1873.5 157.5v8M1878 157.5v8M1876.8 157.5v8M1870 166.0h11.500M1875.7 166.0v6.500" fill="none" stroke="#E6EAF3" stroke-width="1.5" />
<path d="M1895 158.5L1908.5 170M1908.5 158.5L1895 170" fill="none" stroke="#E6EAF3" stroke-width="2" />
<rect x="1561" y="182" width="359" height="33" fill="#FCFCFC" />
<path d="M1907 196.5h7.5l-3.75 4.5z" fill="#1B2A47" />
<rect x="1562" y="215" width="357" height="33" fill="#CFD6E5" />
<rect x="1567" y="220" width="8" height="8" fill="#2A2A2A" />
<rect x="1568" y="223" width="6" height="2" fill="#fff" />
<rect x="1570" y="221" width="2" height="6" fill="#fff" />
<rect x="1567" y="234" width="8" height="8" fill="#2A2A2A" />
<rect x="1568" y="237" width="6" height="2" fill="#fff" />
<rect x="1570" y="235" width="2" height="6" fill="#fff" />
<rect x="1577" y="220" width="8" height="1.7" fill="#2A2A2A" />
<rect x="1577" y="223" width="8" height="1.7" fill="#2A2A2A" />
<rect x="1586" y="223" width="3" height="1.7" fill="#2A2A2A" />
<rect x="1577" y="226" width="8" height="1.7" fill="#2A2A2A" />
<rect x="1586" y="226" width="3" height="1.7" fill="#2A2A2A" />
<rect x="1577" y="229" width="8" height="1.7" fill="#2A2A2A" />
<rect x="1586" y="229" width="3" height="1.7" fill="#2A2A2A" />
<rect x="1577" y="232" width="8" height="1.7" fill="#2A2A2A" />
<rect x="1586" y="232" width="3" height="1.7" fill="#2A2A2A" />
<rect x="1577" y="237" width="8" height="1.7" fill="#2A2A2A" />
<rect x="1577" y="240.3" width="8" height="1.7" fill="#2A2A2A" />
<rect x="1586" y="240.3" width="3" height="1.7" fill="#2A2A2A" />
<rect x="1592" y="216" width="28" height="30" fill="#3F5786" />
<rect x="1593" y="217" width="26" height="28" fill="#FFFCF4" />
<rect x="1595.3" y="220.6" width="10.5" height="10.3" fill="#3A3A3A" />
<text x="1600.5" y="229.6" font-size="10" fill="#eee" text-anchor="middle" font-weight="bold" stroke="#eee" stroke-width="0.4">A</text>
<text x="1600.5" y="242.2" font-size="11.5" fill="#3A3A3A" text-anchor="middle" font-weight="bold" stroke="#3A3A3A" stroke-width="0.7">Z</text>
<path d="M1611.800 225v12.500M1607.200 233l4.600 5.500l4.600-5.500" fill="none" stroke="#0A3FA8" stroke-width="2.6" />
<rect x="1623" y="218" width="1" height="27.5" fill="#8A95AA" />
<path d="M1631 240.300l10-10.500" fill="none" stroke="#9C9C9C" stroke-width="4.8" stroke-linecap="round"/>
<circle cx="1644.6" cy="226" r="6.4" fill="#9C9C9C"/>
<path d="M1645.300 225.300l4.200-4.200l2.800 2.800l-4.200 4.200z" fill="#CFD6E5" />
<rect x="1561" y="920" width="359" height="1" fill="#E4E4E4" />
</g>
<g id="status-bar">
<path d="M23.500 1006h17l-4.500 15.500h-17z" fill="none" stroke="#fff" stroke-width="1.8" />
<text x="53.5" y="1019.3" font-size="17" fill="#fff" textLength="73" lengthAdjust="spacingAndGlyphs" >準備完了</text>
<text x="791" y="1019.3" font-size="17" fill="#fff" textLength="33" lengthAdjust="spacingAndGlyphs" >9 行</text>
<text x="929" y="1019.3" font-size="17" fill="#fff" textLength="43" lengthAdjust="spacingAndGlyphs" >35 列</text>
<text x="1067" y="1019.3" font-size="17" fill="#fff" textLength="61" lengthAdjust="spacingAndGlyphs" >35 文字</text>
<text x="1272" y="1019.3" font-size="17" fill="#fff" textLength="35" lengthAdjust="spacingAndGlyphs" >挿入</text>
<path d="M1740.800 1021.500v-13M1735.200 1013.500l5.600-6l5.600 6" fill="none" stroke="#DCDCDC" stroke-width="2.8" />
<text x="1762" y="1019.3" font-size="17" fill="#fff" textLength="125" lengthAdjust="spacingAndGlyphs" >ソース管理に追加</text>
<path d="M1896 1015.8h12l-6.0 -6.3z" fill="#fff" />
</g>
</svg>
</body></html>
